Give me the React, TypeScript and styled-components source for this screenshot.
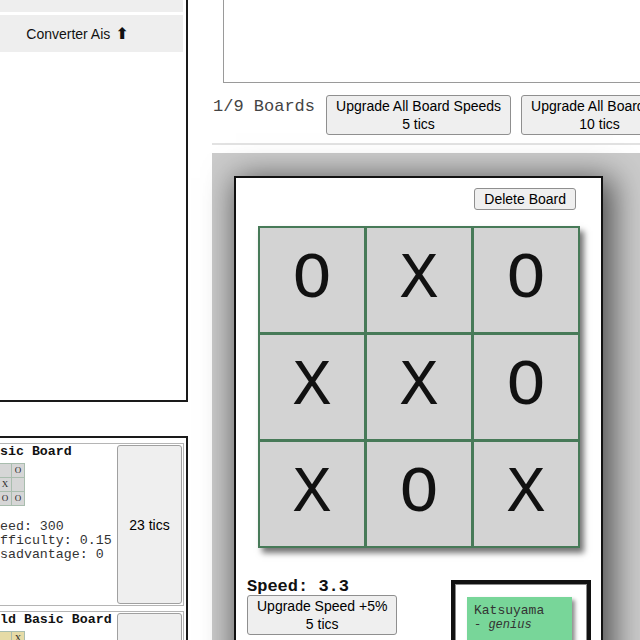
import { createGlobalStyle, styled } from "styled-components";

const GlobalStyle = createGlobalStyle`
  html, body {
    margin: 0;
    padding: 0;
    background: #fff;
    overflow: hidden;
  }
  body {
    font-family: "Liberation Sans", Arial, sans-serif;
  }
`;

const Page = styled.div`
  display: flex;
  align-items: flex-start;
  gap: 24px;
  width: 640px;
  height: 640px;
  overflow: hidden;
`;

const LeftColumn = styled.div`
  flex-shrink: 0;
  width: 218px;
  margin-left: -30px;
  margin-top: -30px;
`;

const ConverterPanel = styled.div`
  box-sizing: border-box;
  height: 432px;
  border: 2px solid #1a1a1a;
  padding: 0 3px 0 0;
  display: flex;
  flex-direction: column;
  gap: 3px;
`;

const PanelBar = styled.div<{ $h: number }>`
  height: ${(p) => p.$h}px;
  background: #eeeeee;
  display: flex;
  align-items: center;
  justify-content: center;
  font-size: 14px;
  color: #111;
  gap: 5px;
`;

const Arrow = styled.span`
  font-family: "DejaVu Sans", sans-serif;
  font-size: 16px;
  font-weight: bold;
  line-height: 14px;
`;

const ShopPanel = styled.div`
  margin-top: 34px;
  border: 2px solid #1a1a1a;
  padding: 5px 2px 5px 5px;
  display: flex;
  flex-direction: column;
  gap: 5px;
`;

const ShopCard = styled.div`
  display: flex;
  border: 1px solid #b5b5b5;
  height: 163px;
  box-sizing: border-box;
`;

const ShopInfo = styled.div`
  flex: 1;
  padding: 0 0 0 6px;
  font-family: "Liberation Mono", "Courier New", monospace;
  font-size: 13.3px;
  color: #333;
`;

const ShopTitle = styled.div`
  font-weight: bold;
  color: #111;
  line-height: 15px;
  white-space: nowrap;
`;

const MiniBoard = styled.div`
  display: grid;
  grid-template-columns: repeat(3, 12px);
  grid-auto-rows: 13px;
  gap: 1px;
  width: max-content;
  margin: 4px 0 0 1px;
  background: #a9bdae;
  border: 1px solid #a9bdae;
`;

const MiniCell = styled.div<{ $gold?: boolean }>`
  background: ${(p) => (p.$gold ? "#e6dba6" : "#d6d6d6")};
  font-family: "Liberation Serif", serif;
  font-size: 9px;
  line-height: 13px;
  text-align: center;
  color: #222;
`;

const Stats = styled.div`
  margin-top: 14px;
  line-height: 14px;
  white-space: nowrap;
`;

const Button = styled.button`
  font-family: "Liberation Sans", Arial, sans-serif;
  font-size: 14px;
  line-height: 18px;
  color: #000;
  background: #efefef;
  border: 1px solid #8f8f8f;
  border-radius: 3px;
  padding: 1px 9px;
  white-space: nowrap;
  flex-shrink: 0;
`;

const BuyButton = styled(Button)`
  width: 65px;
  margin: 1px 1px 1px 0;
  padding: 0;
  border-color: #a0a0a0;
`;

const MainColumn = styled.div`
  flex-shrink: 0;
  width: 470px;
`;

const LogBox = styled.div`
  box-sizing: border-box;
  height: 103px;
  margin: -20px 0 0 11px;
  border: 1px solid #9a9a9a;
`;

const ControlRow = styled.div`
  display: flex;
  align-items: flex-start;
  gap: 10px;
  margin-top: 12px;
`;

const BoardsLabel = styled.div`
  font-family: "Liberation Mono", "Courier New", monospace;
  font-size: 17px;
  color: #444;
  padding: 2px 1px 0 1px;
  white-space: nowrap;
`;

const Divider = styled.div`
  height: 2px;
  margin-top: 8px;
  background: #e2e2e2;
`;

const BoardArea = styled.div`
  margin-top: 8px;
  background: #cbcbcb;
  padding: 23px 22px 60px;
`;

const BoardCard = styled.div`
  width: 369px;
  box-sizing: border-box;
  background: #fff;
  border: 2px solid #111;
  padding: 10px 10px 40px;
  box-shadow: 6px 6px 30px 4px rgba(0, 0, 0, 0.62);
`;

const DeleteRow = styled.div`
  display: flex;
  justify-content: flex-end;
  padding-right: 15px;
`;

const Grid = styled.div`
  margin: 16px 11px 0 12px;
  display: grid;
  grid-template-columns: repeat(3, 1fr);
  gap: 3px;
  padding: 2px;
  background: #477a58;
  box-shadow: 4px 5px 6px rgba(0, 0, 0, 0.55);
`;

const Cell = styled.div`
  aspect-ratio: 1;
  background: #d3d3d3;
  display: flex;
  align-items: center;
  justify-content: center;
  font-family: "Liberation Mono", "Courier New", monospace;
  font-size: 65px;
  line-height: 1;
  color: #111;
`;

const BottomRow = styled.div`
  display: flex;
  justify-content: space-between;
  align-items: flex-start;
  margin-top: 30px;
  padding-left: 1px;
`;

const SpeedBlock = styled.div`
  display: flex;
  flex-direction: column;
  align-items: flex-start;
`;

const SpeedLabel = styled.div`
  font-family: "Liberation Mono", "Courier New", monospace;
  font-weight: bold;
  font-size: 17px;
  line-height: 17px;
  color: #111;
`;

const AiFrame = styled.div`
  width: 140px;
  box-sizing: border-box;
  margin-top: 2px;
  border: 4px solid #111;
  box-shadow: inset 0 0 0 1px #8a8a8a;
  padding: 13px 15px 10px 12px;
`;

const AiCard = styled.div`
  background: #78d699;
  box-shadow: 3px 3px 4px rgba(0, 0, 0, 0.45);
  padding: 6px 7px;
  height: 90px;
  font-family: "Liberation Mono", "Courier New", monospace;
  font-size: 13px;
  line-height: 15px;
  color: #333;
`;

const AiTrait = styled.div`
  font-style: italic;
  font-size: 12px;
`;

const board = ["O", "X", "O", "X", "X", "O", "X", "O", "X"];
const basicMini = ["X", "", "O", "O", "X", "", "X", "O", "O"];
const goldMini = ["O", "", "X", "", "", "", "", "", ""];

export default function App() {
  return (
    <>
      <GlobalStyle />
      <Page>
        <LeftColumn>
          <ConverterPanel>
            <PanelBar $h={40} />
            <PanelBar $h={37}>
              Converter Ais <Arrow>⬆</Arrow>
            </PanelBar>
          </ConverterPanel>
          <ShopPanel>
            <ShopCard>
              <ShopInfo>
                <ShopTitle>Basic Board</ShopTitle>
                <MiniBoard>
                  {basicMini.map((v, i) => (
                    <MiniCell key={i}>{v}</MiniCell>
                  ))}
                </MiniBoard>
                <Stats>
                  <div>Speed: 300</div>
                  <div>Difficulty: 0.15</div>
                  <div>Disadvantage: 0</div>
                </Stats>
              </ShopInfo>
              <BuyButton>23 tics</BuyButton>
            </ShopCard>
            <ShopCard>
              <ShopInfo>
                <ShopTitle>Gold Basic Board</ShopTitle>
                <MiniBoard>
                  {goldMini.map((v, i) => (
                    <MiniCell key={i} $gold>
                      {v}
                    </MiniCell>
                  ))}
                </MiniBoard>
              </ShopInfo>
              <BuyButton>40 tics</BuyButton>
            </ShopCard>
          </ShopPanel>
        </LeftColumn>

        <MainColumn>
          <LogBox />
          <ControlRow>
            <BoardsLabel>1/9 Boards</BoardsLabel>
            <Button>
              Upgrade All Board Speeds
              <br />5 tics
            </Button>
            <Button>
              Upgrade All Board AIs
              <br />
              10 tics
            </Button>
          </ControlRow>
          <Divider />
          <BoardArea>
            <BoardCard>
              <DeleteRow>
                <Button>Delete Board</Button>
              </DeleteRow>
              <Grid>
                {board.map((v, i) => (
                  <Cell key={i}>{v}</Cell>
                ))}
              </Grid>
              <BottomRow>
                <SpeedBlock>
                  <SpeedLabel>Speed: 3.3</SpeedLabel>
                  <Button>
                    Upgrade Speed +5%
                    <br />5 tics
                  </Button>
                </SpeedBlock>
                <AiFrame>
                  <AiCard>
                    Katsuyama
                    <AiTrait>- genius</AiTrait>
                  </AiCard>
                </AiFrame>
              </BottomRow>
            </BoardCard>
          </BoardArea>
        </MainColumn>
      </Page>
    </>
  );
}
